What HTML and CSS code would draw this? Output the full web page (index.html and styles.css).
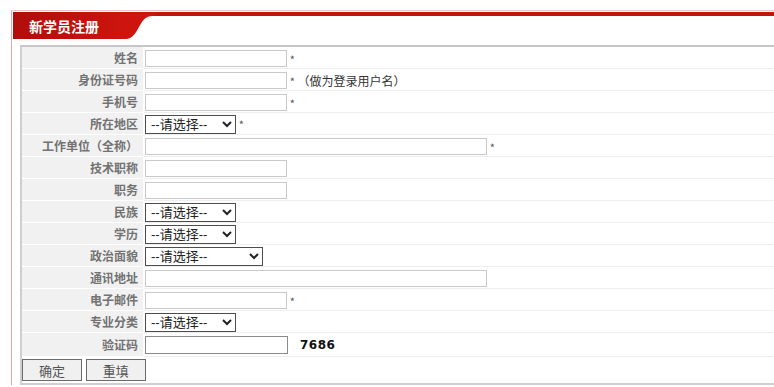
FILE: index.html
```html
<!DOCTYPE html>
<html lang="zh-CN">

<head>
    <meta charset="UTF-8">
    <meta name="viewport" content="width=device-width, initial-scale=1.0">
    <title>新学员注册</title>
    <link rel="stylesheet" href="styles.css">
</head>

<body>
    <div class="box">
        <div class="box-head">
            <div class="tab">新学员注册</div>
            <svg class="tab-curve" width="30" height="27" viewBox="0 0 30 27">
                <path d="M0 0 H30 V4 H27 C19 4 17 8 13 15 C9 23 5 27 0 27 Z" fill="#cd150e" />
            </svg>
            <div class="rule"></div>
        </div>

        <form>
            <table class="reg">
                <tr>
                    <td class="lbl">姓名</td>
                    <td class="val"><input type="text" class="txt"> <span class="req">*</span></td>
                </tr>
                <tr>
                    <td class="lbl">身份证号码</td>
                    <td class="val"><input type="text" class="txt"> <span class="req">*</span> <span class="note">（做为登录用户名）</span></td>
                </tr>
                <tr>
                    <td class="lbl">手机号</td>
                    <td class="val"><input type="text" class="txt"> <span class="req">*</span></td>
                </tr>
                <tr>
                    <td class="lbl">所在地区</td>
                    <td class="val"><select class="sel"><option>--请选择--</option></select> <span class="req">*</span></td>
                </tr>
                <tr>
                    <td class="lbl">工作单位（全称）</td>
                    <td class="val"><input type="text" class="txt wide"> <span class="req">*</span></td>
                </tr>
                <tr>
                    <td class="lbl">技术职称</td>
                    <td class="val"><input type="text" class="txt"></td>
                </tr>
                <tr>
                    <td class="lbl">职务</td>
                    <td class="val"><input type="text" class="txt"></td>
                </tr>
                <tr>
                    <td class="lbl">民族</td>
                    <td class="val"><select class="sel"><option>--请选择--</option></select></td>
                </tr>
                <tr>
                    <td class="lbl">学历</td>
                    <td class="val"><select class="sel"><option>--请选择--</option></select></td>
                </tr>
                <tr>
                    <td class="lbl">政治面貌</td>
                    <td class="val"><select class="sel sel-wide"><option>--请选择--</option></select></td>
                </tr>
                <tr>
                    <td class="lbl">通讯地址</td>
                    <td class="val"><input type="text" class="txt wide"></td>
                </tr>
                <tr>
                    <td class="lbl">电子邮件</td>
                    <td class="val"><input type="text" class="txt"> <span class="req">*</span></td>
                </tr>
                <tr>
                    <td class="lbl">专业分类</td>
                    <td class="val"><select class="sel"><option>--请选择--</option></select></td>
                </tr>
                <tr class="code-row">
                    <td class="lbl">验证码</td>
                    <td class="val"><input type="text" class="txt code-input"><span class="code">7686</span></td>
                </tr>
                <tr class="btn-row">
                    <td class="btns" colspan="2">
                        <button type="submit" class="btn">确定</button>
                        <button type="reset" class="btn">重填</button>
                    </td>
                </tr>
            </table>
        </form>
    </div>
</body>

</html>
```

FILE: styles.css
```css
body {
    margin: 0;
    padding: 10px 0 0 11px;
    overflow: hidden;
    background-color: #fff;
    font-family: "Noto Sans CJK SC", "Liberation Sans", sans-serif;
    font-size: 12px;
    color: #333;
}

.box {
    width: 900px;
    border-top: 1px solid #f0c4c4;
    border-left: 1px solid #e9a3a3;
    padding: 1px 0 0 1px;
}

.box-head {
    display: flex;
    height: 27px;
}

.tab {
    width: 97px;
    padding-left: 16px;
    line-height: 29px;
    color: #fff;
    font-size: 14px;
    font-weight: bold;
    white-space: nowrap;
    background: linear-gradient(to right, #b00d0a, #cd150e);
}

.tab-curve {
    display: block;
}

.rule {
    flex: 1;
    border-top: 4px solid #c4120c;
}

.reg {
    margin: 6px 0 0 7px;
    width: 880px;
    border-collapse: separate;
    border-spacing: 0;
    border-top: 2px solid #c6c6c6;
    border-left: 2px solid #cfcfcf;
    border-bottom: 2px solid #cfcfcf;
}

.reg tr {
    height: 22px;
}

.reg tr.code-row {
    height: 24px;
}

.reg td {
    padding: 0;
    vertical-align: middle;
}

.lbl {
    width: 116px;
    padding-right: 5px !important;
    text-align: right;
    font-weight: bold;
    color: #727272;
    background-color: #f1f1f1;
    border-bottom: 1px solid #fff;
    border-right: 1px solid #fff;
    white-space: nowrap;
}

.val {
    padding-left: 1px !important;
    border-bottom: 1px solid #eeeeee;
    white-space: nowrap;
}

.txt {
    box-sizing: border-box;
    width: 142px;
    height: 17px;
    margin: 0;
    padding: 0 2px;
    border: 1px solid #c9c9c9;
    vertical-align: middle;
    font-size: 12px;
}

.txt.wide {
    width: 342px;
}

.code-input {
    width: 143px;
    height: 18px;
    border-color: #8a8a8a;
}

.code {
    display: inline-block;
    margin-left: 12px;
    font-family: "DejaVu Sans", sans-serif;
    font-weight: bold;
    font-size: 12px;
    letter-spacing: 0.5px;
    color: #111;
    vertical-align: middle;
}

.sel {
    box-sizing: border-box;
    width: 91px;
    height: 19px;
    margin: 0;
    padding: 0 0 0 1px;
    border: 1px solid #4d4d4d;
    border-radius: 0;
    background-color: #fff;
    font-family: "Liberation Sans", "Noto Sans CJK SC", sans-serif;
    font-size: 13px;
    line-height: 17px;
    color: #222;
    vertical-align: middle;
}

.sel-wide {
    width: 118px;
}

.req {
    color: #555;
    font-size: 11px;
    vertical-align: middle;
}

.note {
    color: #333;
    font-size: 12px;
    vertical-align: middle;
}

.reg tr.btn-row {
    height: 26px;
}

.btns .btn + .btn {
    margin-left: 1px;
}

.btn {
    box-sizing: border-box;
    width: 60px;
    height: 22px;
    margin: 0;
    padding: 0;
    border: 1px solid #6b6b6b;
    background-color: #f0f0f0;
    font-family: "Noto Sans CJK SC", sans-serif;
    font-size: 13px;
    color: #555;
    vertical-align: middle;
}
```
